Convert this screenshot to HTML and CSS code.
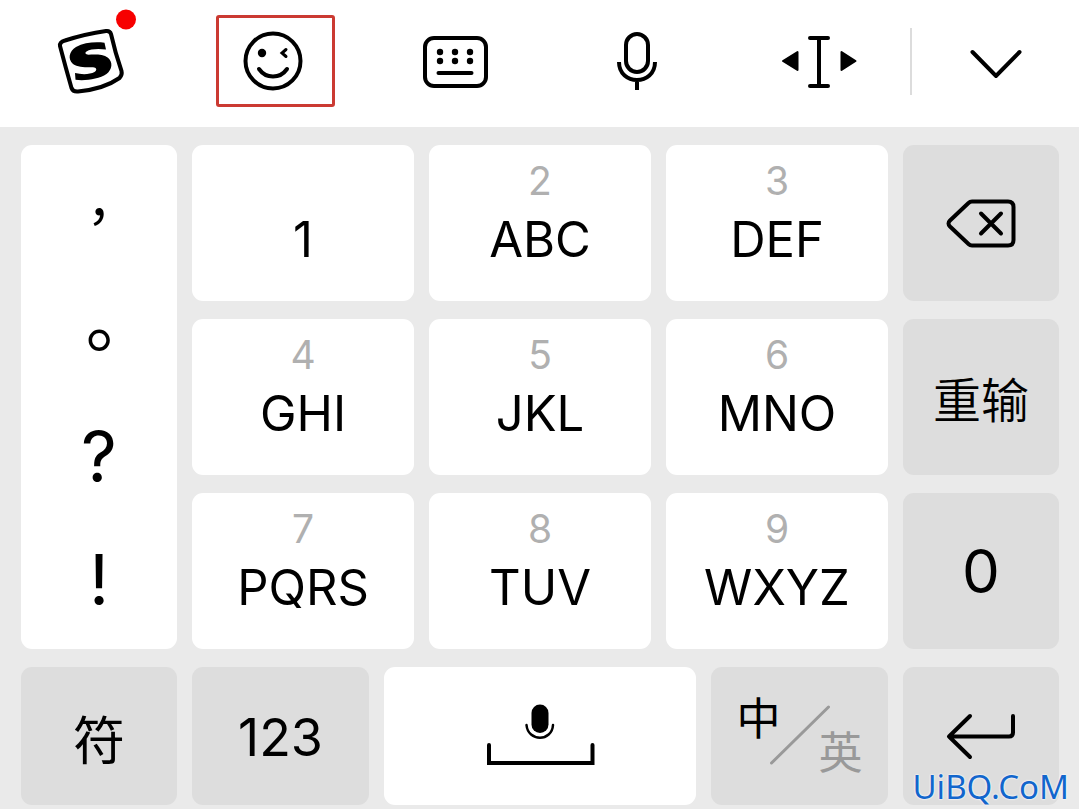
FILE: index.html
```html
<!DOCTYPE html>
<html lang="zh-CN">
<head>
<meta charset="utf-8">
<meta name="viewport" content="width=device-width, initial-scale=1">
<title>键盘</title>
<link rel="stylesheet" href="styles.css">
</head>
<body>
<main class="ime">
  <nav class="toolbar">
    <button class="tool" aria-label="菜单">
      <svg width="90" height="100" viewBox="46 0 90 100" fill="none">
        <path d="M65 40.500Q85 34 106 31Q110 30.500 111 34Q115 52 121.500 71Q122.500 75 119.500 78Q104 89 78 91.500Q73 92 71.500 88Q65.500 67 60 46Q59.500 42 65 40.500Z" stroke="#000" stroke-width="4"/>
        <path d="M104.500 42.800L106 49.600C98 48.600 90.500 49 86.500 51.500C84.500 53 85.500 54.500 88.500 54.700C95 54.500 103 54 108 57.800C113 62 112.500 69.500 106.500 74C99 79 86 81 75.500 79.800L75 73C82 74.800 90 74.500 94.500 72C97.500 70 96.500 67.600 93 67.300C86 67.400 78 67.500 73 64C67.500 59 69 51.500 76 47C84 42.600 95 41.600 104.500 42.800Z" fill="#000"/>
        <circle cx="126" cy="19.500" r="10" fill="#f70000"/>
      </svg>
    </button>
    <button class="tool tool-marked" aria-label="表情">
      <svg width="62" height="62" viewBox="242 31 62 62" fill="none" stroke="#000" stroke-width="4" stroke-linecap="round">
        <circle cx="273" cy="61" r="27.500"/>
        <circle cx="262" cy="53" r="4.200" fill="#000" stroke="none"/>
        <path d="M286 49.500L282 53L286 56.500" stroke-width="3"/>
        <path d="M259 69C266 79 280 79 287 69"/>
      </svg>
    </button>
    <button class="tool" aria-label="键盘布局">
      <svg width="66" height="54" viewBox="422 35 66 54" fill="none" stroke="#000" stroke-width="4">
        <rect x="425" y="38" width="61" height="48" rx="9"/>
        <path d="M438.500 73H471.500" stroke-linecap="round"/>
        <g fill="#000" stroke="none"><circle cx="440" cy="52" r="3.200"/><circle cx="455" cy="52" r="3.200"/><circle cx="470" cy="52" r="3.200"/><circle cx="440" cy="61" r="3.200"/><circle cx="455" cy="61" r="3.200"/><circle cx="470" cy="61" r="3.200"/></g>
      </svg>
    </button>
    <button class="tool" aria-label="语音">
      <svg width="44" height="60" viewBox="615 32 44 60" fill="none" stroke="#000" stroke-width="4">
        <rect x="626" y="34" width="22" height="38" rx="11"/>
        <path d="M619 62C619 86 655 86 655 62M637 80V90"/>
      </svg>
    </button>
    <button class="tool" aria-label="移动光标">
      <svg width="78" height="56" viewBox="780 33 78 56" fill="none" stroke="#000" stroke-width="4" stroke-linecap="round" stroke-linejoin="round">
        <path d="M810 37H828M819 37V85M810 85H828"/>
        <path d="M797.500 51V69L783 60ZM841.500 51V69L855.500 60Z" fill="#000" stroke-width="2"/>
      </svg>
    </button>
    <button class="tool tool-last" aria-label="收起">
      <svg width="54" height="32" viewBox="968 46 54 32" fill="none" stroke="#000" stroke-width="4" stroke-linecap="round">
        <path d="M972.500 52L996 76L1019.500 52"/>
      </svg>
    </button>
  </nav>

  <section class="keys">
    <div class="grid">
      <div class="punctuation">
        <button class="mark mark-cjk mark-small" lang="zh-TW">，</button>
        <button class="mark mark-cjk" lang="zh-TW">。</button>
        <button class="mark">?</button>
        <button class="mark">!</button>
      </div>
      <button class="key letters">1</button>
      <button class="key letters"><span class="hint">2</span>ABC</button>
      <button class="key letters"><span class="hint">3</span>DEF</button>
      <button class="key dark" aria-label="删除">
        <svg width="70" height="52" viewBox="946 198 70 52" fill="none" stroke="#000" stroke-width="4" stroke-linecap="round" stroke-linejoin="round">
          <path d="M972 202.500H1008Q1013.500 202.500 1013.500 208V241Q1013.500 246.500 1008 246.500H972Q970 246.500 968.500 245L950 227.500Q947 224.500 950 221.500L968.500 204Q970 202.500 972 202.500Z"/>
          <path d="M981 214.500L1001 234.500M1001 214.500L981 234.500"/>
        </svg>
      </button>
      <button class="key letters"><span class="hint">4</span>GHI</button>
      <button class="key letters"><span class="hint">5</span>JKL</button>
      <button class="key letters"><span class="hint">6</span>MNO</button>
      <button class="key dark retype">重输</button>
      <button class="key letters"><span class="hint">7</span>PQRS</button>
      <button class="key letters"><span class="hint">8</span>TUV</button>
      <button class="key letters"><span class="hint">9</span>WXYZ</button>
      <button class="key dark zero">0</button>
    </div>
    <div class="bottom">
      <button class="key dark wide-text">符</button>
      <button class="key dark wide-text">123</button>
      <button class="key" aria-label="空格">
        <svg width="110" height="64" viewBox="485 703 110 64" fill="none" stroke="#000" stroke-width="4" stroke-linecap="round" overflow="visible">
          <rect x="531.500" y="703.500" width="17" height="28.500" rx="8.500" fill="#000" stroke="none"/>
          <path d="M526.500 724C528 741 552 741 553 724" stroke-width="2.500"/>
          <path d="M489 744V762H592.500V744"/>
        </svg>
      </button>
      <button class="key dark language">
        <span class="lang-on">中</span>
        <svg class="slash" width="60" height="60" viewBox="0 1 60 60" stroke="#999" stroke-width="3" stroke-linecap="round" overflow="visible"><path d="M1.500 58L58.500 2"/></svg>
        <span class="lang-off">英</span>
      </button>
      <button class="key dark" aria-label="换行">
        <svg width="70" height="48" viewBox="946 713 70 48" fill="none" stroke="#000" stroke-width="4" stroke-linecap="round" stroke-linejoin="round">
          <path d="M970 717L949 737.500L970 758M949 737.500H1009Q1013 737.500 1013 733.500V717"/>
        </svg>
      </button>
    </div>
    <span class="watermark">UiBQ.CoM</span>
  </section>
</main>
</body>
</html>
```
FILE: styles.css
```css
* {
  box-sizing: border-box;
}

body {
  margin: 0;
  background: #fff;
  color: #000;
  font-family: Inter, "Noto Sans CJK SC", sans-serif;
}

button {
  margin: 0;
  padding: 0;
  border: 0;
  background: none;
  color: inherit;
  font: inherit;
}

svg {
  display: block;
  flex: none;
}

.toolbar {
  display: grid;
  grid-template-columns: repeat(5, 182fr) 169fr;
  height: 127px;
  padding-bottom: 4px;
}

.tool {
  position: relative;
  display: flex;
  align-items: center;
  justify-content: center;
}

.tool:first-child {
  align-items: flex-start;
}

.tool-marked::after {
  content: "";
  position: absolute;
  inset: 15px 29px 16px 34px;
  border: 3px solid #cb3a32;
  border-radius: 3px;
}

.tool-last::before {
  content: "";
  position: absolute;
  left: 0;
  top: 28px;
  bottom: 28px;
  width: 2px;
  background: #dcdcdc;
}

.keys {
  position: relative;
  display: flex;
  flex-direction: column;
  gap: 18px;
  padding: 18px 20px 4px 21px;
  background: #eaeaea;
}

.grid {
  display: grid;
  grid-template-columns: 156fr repeat(3, 222fr) 156fr;
  grid-auto-rows: 156px;
  gap: 18px 15px;
}

.bottom {
  display: grid;
  grid-template-columns: 156fr 177fr 312fr 177fr 156fr;
  grid-auto-rows: 138px;
  gap: 15px;
}

.punctuation {
  grid-row: span 3;
  display: grid;
  grid-template-rows: repeat(4, 1fr);
  padding: 6px 0 8px;
  border-radius: 11px;
  background: #fff;
}

.mark {
  font-size: 70px;
  line-height: 80px;
}

.mark-cjk {
  padding-top: 4px;
  font-family: "Noto Sans CJK TC", sans-serif;
}

.mark-small {
  font-size: 52px;
}

.key {
  display: flex;
  align-items: center;
  justify-content: center;
  border-radius: 11px;
  background: #fff;
}

.dark {
  background: #ddd;
}

.letters {
  flex-direction: column;
  justify-content: flex-end;
  gap: 10px;
  padding-bottom: 32px;
  font-size: 49px;
  font-weight: 400;
  line-height: 58px;
}

.hint {
  color: #b0b0b0;
  font-size: 39px;
  line-height: 40px;
}

.retype {
  font-size: 48px;
  font-weight: 350;
}

.zero {
  font-size: 60px;
  font-weight: 400;
}

.wide-text {
  padding-top: 2px;
  font-size: 52px;
  font-weight: 400;
}

.language {
  font-size: 44px;
  line-height: 44px;
}

.lang-on {
  padding-bottom: 34px;
}

.lang-off {
  padding-top: 34px;
  color: #999;
}

.slash {
  margin: 0 -11px;
}

.watermark {
  position: absolute;
  right: 10px;
  bottom: 2px;
  color: #1266cc;
  font-family: "Noto Sans", sans-serif;
  font-size: 33px;
  line-height: 40px;
  text-shadow: 0 0 2px #fff, 0 0 2px #fff;
}
```
